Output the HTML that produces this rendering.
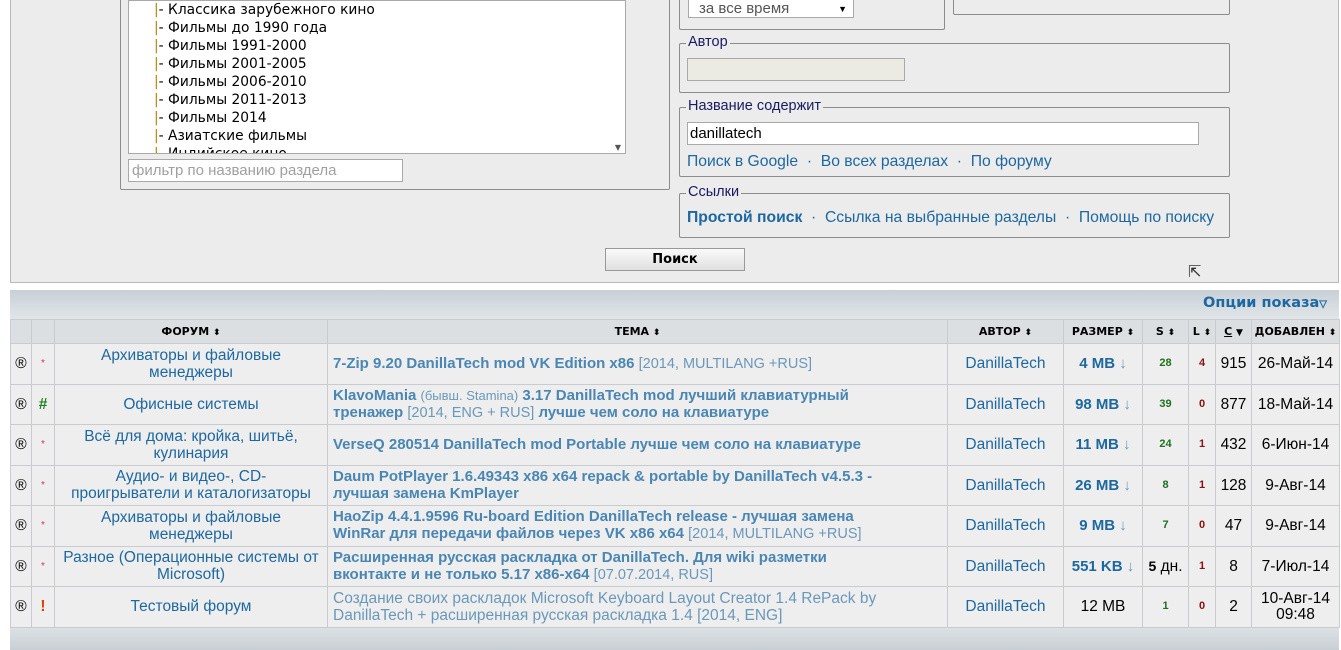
<!DOCTYPE html>
<html><head><meta charset="utf-8"><style>
*{box-sizing:border-box}
body{margin:0;width:1341px;height:650px;background:#fff;font-family:"DejaVu Sans","Liberation Sans",sans-serif;font-size:13px;position:relative;overflow:hidden}
.a{position:absolute}
#top{left:10px;top:-2px;width:1329px;height:285px;background:#ececec;border:1px solid #b9b9b9}
.fs{position:absolute;border:1px solid #8c8c8c;border-radius:2px}
.lg{position:absolute;top:-10px;left:6px;background:#ececec;padding:0 2px;font-size:14.5px;color:#1a1a60;font-family:"Liberation Sans",sans-serif}
.inp{position:absolute;background:#fff;border:1px solid #a9a9a9}
.lnk{color:#1d68a0;font-family:"Liberation Sans",sans-serif;font-size:15.7px}
.list{left:128px;top:0;width:498px;height:154px;background:#fff;border:1px solid #a9a9a9;font-size:13.8px;line-height:18px;padding-left:25px;color:#000;overflow:hidden}
.list span{color:#c08000}
table{position:absolute;left:10px;top:319px;width:1329px;border-collapse:collapse;table-layout:fixed}
td,th{border:1px solid #c8ccd0;text-align:center;vertical-align:middle;padding:0 5px}
th{height:24px;background:#dcdfe1;font-size:11px;font-weight:bold;color:#000}
tr.r td{height:40.5px;background:#eeeeee;font-family:"Liberation Sans",sans-serif;font-size:15.5px;line-height:17px}
td.f{color:#1d68a0;padding:0 8px}
td.t{text-align:left;color:#4a86b3;font-family:"DejaVu Sans",sans-serif;font-weight:bold;font-size:15px!important;line-height:17px;padding:0 57px 0 5px}
td.t i{font-style:normal;font-weight:normal;font-family:"Liberation Sans",sans-serif;font-size:14.5px;color:#6a98bb}
td.t i.s{font-size:13px}
td.au{color:#1d68a0}
td.sz{color:#1d68a0;font-family:"DejaVu Sans",sans-serif;font-weight:bold;font-size:15px!important;padding:0 2px}
td.sz span{font-weight:normal;color:#6a98bb}
td.se{color:#207020;font-weight:bold;font-family:"DejaVu Serif",serif;font-size:11px!important}
td.le{color:#8b1010;font-weight:bold;font-family:"DejaVu Serif",serif;font-size:11px!important}
td.c{padding:0}
td.d{padding:0 2px;white-space:nowrap}
.sp{font-size:9px}
</style></head><body>
<div id="top" class="a">
</div>
<div class="fs" style="left:120px;top:-4px;width:550px;height:194px"></div>
<div class="list a">
<span>|</span>- Классика зарубежного кино<br><span>|</span>- Фильмы до 1990 года<br><span>|</span>- Фильмы 1991-2000<br><span>|</span>- Фильмы 2001-2005<br><span>|</span>- Фильмы 2006-2010<br><span>|</span>- Фильмы 2011-2013<br><span>|</span>- Фильмы 2014<br><span>|</span>- Азиатские фильмы<br><span>|</span>- Индийское кино
<div class="a" style="right:4px;top:138px;font-size:8px;color:#555">▼</div>
</div>
<div class="inp" style="left:128px;top:159px;width:275px;height:23px;color:#a0a0a0;font-size:15px;padding:2px 3px;font-family:'Liberation Sans',sans-serif">фильтр по названию раздела</div>

<div class="fs" style="left:679px;top:-4px;width:266px;height:34px"></div>
<div class="inp" style="left:688px;top:-2px;width:166px;height:20px;font-size:15px;color:#555;padding:0 10px;font-family:'Liberation Sans',sans-serif;line-height:20px">за все время<span style="position:absolute;right:6px;font-size:9px;color:#000">▼</span></div>
<div class="fs" style="left:953px;top:-4px;width:277px;height:19px"></div>
<div class="fs" style="left:679px;top:43px;width:551px;height:50px"><div class="lg">Автор</div></div>
<div class="inp" style="left:687px;top:58px;width:218px;height:23px;background:#ebebe4"></div>
<div class="fs" style="left:679px;top:107px;width:551px;height:70px"><div class="lg">Название содержит</div></div>
<div class="inp" style="left:687px;top:122px;width:512px;height:23px;font-size:15px;padding:2px 2px;font-family:'Liberation Sans',sans-serif">danillatech</div>
<div class="a lnk" style="left:687px;top:153px">Поиск в Google &nbsp;·&nbsp; Во всех разделах &nbsp;·&nbsp; По форуму</div>
<div class="fs" style="left:679px;top:193px;width:551px;height:45px"><div class="lg">Ссылки</div></div>
<div class="a lnk" style="left:687px;top:209px"><b>Простой поиск</b> &nbsp;·&nbsp; Ссылка на выбранные разделы &nbsp;·&nbsp; Помощь по поиску</div>
<div class="a" style="left:605px;top:248px;width:140px;height:23px;border:1px solid #999;background:linear-gradient(#fafafa,#e0e0e0);text-align:center;font-weight:bold;font-size:13px;line-height:21px">Поиск</div>
<div class="a" style="left:1188px;top:262px;font-size:16px;color:#333">⇱</div>

<div class="a" style="left:10px;top:290px;width:1329px;height:30px;background:linear-gradient(#c8d0d6,#e2e6e9);"></div>
<div class="a" style="left:1203px;top:295px;color:#1d68a0;font-weight:bold;font-size:14.5px">Опции показа<span style="font-size:10px;color:#fff;-webkit-text-stroke:0.5px #1d68a0">▽</span></div>
<div class="a" style="left:10px;top:627px;width:1329px;height:23px;background:linear-gradient(#dde1e4,#c9d0d5)"></div>
<table>
<colgroup><col style="width:21px"><col style="width:23px"><col style="width:273px"><col style="width:620px"><col style="width:116px"><col style="width:79px"><col style="width:46px"><col style="width:27px"><col style="width:36px"><col style="width:88px"></colgroup>
<tr><th></th><th></th><th>ФОРУМ <span class="sp">⬍</span></th><th>ТЕМА <span class="sp">⬍</span></th><th>АВТОР <span class="sp">⬍</span></th><th>РАЗМЕР <span class="sp">⬍</span></th><th>S <span class="sp">⬍</span></th><th style="padding:0">L <span class="sp">⬍</span></th><th style="padding:0"><u>C</u> <span class="sp">▼</span></th><th style="padding:0">ДОБАВЛЕН <span class="sp">⬍</span></th></tr>
<tr class="r"><td style="padding:0">®</td><td style="color:#d03070;font-size:10px;padding:0">*</td><td class="f">Архиваторы и файловые менеджеры</td><td class="t">7-Zip 9.20 DanillaTech mod VK Edition x86 <i>[2014, MULTILANG +RUS]</i></td><td class="au">DanillaTech</td><td class="sz">4 MB <span>↓</span></td><td class="se">28</td><td class="le">4</td><td class="c">915</td><td class="d">26-Май-14</td></tr>
<tr class="r"><td style="padding:0">®</td><td style="color:#208020;font-weight:bold;padding:0">#</td><td class="f">Офисные системы</td><td class="t">KlavoMania <i class="s">(бывш. Stamina)</i> 3.17 DanillaTech mod лучший клавиатурный тренажер <i>[2014, ENG + RUS]</i> лучше чем соло на клавиатуре</td><td class="au">DanillaTech</td><td class="sz">98 MB <span>↓</span></td><td class="se">39</td><td class="le">0</td><td class="c">877</td><td class="d">18-Май-14</td></tr>
<tr class="r"><td style="padding:0">®</td><td style="color:#d03070;font-size:10px;padding:0">*</td><td class="f">Всё для дома: кройка, шитьё, кулинария</td><td class="t">VerseQ 280514 DanillaTech mod Portable лучше чем соло на клавиатуре</td><td class="au">DanillaTech</td><td class="sz">11 MB <span>↓</span></td><td class="se">24</td><td class="le">1</td><td class="c">432</td><td class="d">6-Июн-14</td></tr>
<tr class="r"><td style="padding:0">®</td><td style="color:#d03070;font-size:10px;padding:0">*</td><td class="f">Аудио- и видео-, CD-проигрыватели и каталогизаторы</td><td class="t">Daum PotPlayer 1.6.49343 x86 x64 repack &amp; portable by DanillaTech v4.5.3 - лучшая замена KmPlayer</td><td class="au">DanillaTech</td><td class="sz">26 MB <span>↓</span></td><td class="se">8</td><td class="le">1</td><td class="c">128</td><td class="d">9-Авг-14</td></tr>
<tr class="r"><td style="padding:0">®</td><td style="color:#d03070;font-size:10px;padding:0">*</td><td class="f">Архиваторы и файловые менеджеры</td><td class="t">HaoZip 4.4.1.9596 Ru-board Edition DanillaTech release - лучшая замена WinRar для передачи файлов через VK x86 x64 <i>[2014, MULTILANG +RUS]</i></td><td class="au">DanillaTech</td><td class="sz">9 MB <span>↓</span></td><td class="se">7</td><td class="le">0</td><td class="c">47</td><td class="d">9-Авг-14</td></tr>
<tr class="r"><td style="padding:0">®</td><td style="color:#d03070;font-size:10px;padding:0">*</td><td class="f" style="padding:0 2px">Разное (Операционные системы от Microsoft)</td><td class="t">Расширенная русская раскладка от DanillaTech. Для wiki разметки вконтакте и не только 5.17 x86-x64 <i>[07.07.2014, RUS]</i></td><td class="au">DanillaTech</td><td class="sz">551 KB <span>↓</span></td><td style="padding:0"><b style="font-size:14px">5</b> дн.</td><td class="le">1</td><td class="c">8</td><td class="d">7-Июл-14</td></tr>
<tr class="r"><td style="padding:0">®</td><td style="color:#e04000;font-weight:bold;padding:0">!</td><td class="f">Тестовый форум</td><td class="t" style="font-weight:normal;font-family:'Liberation Sans',sans-serif;font-size:15.5px!important;color:#6a98bb">Создание своих раскладок Microsoft Keyboard Layout Creator 1.4 RePack by DanillaTech + расширенная русская раскладка 1.4 [2014, ENG]</td><td class="au">DanillaTech</td><td>12 MB</td><td class="se">1</td><td class="le">0</td><td class="c">2</td><td class="d" style="line-height:16px">10-Авг-14<br>09:48</td></tr>
</table>
</body></html>
